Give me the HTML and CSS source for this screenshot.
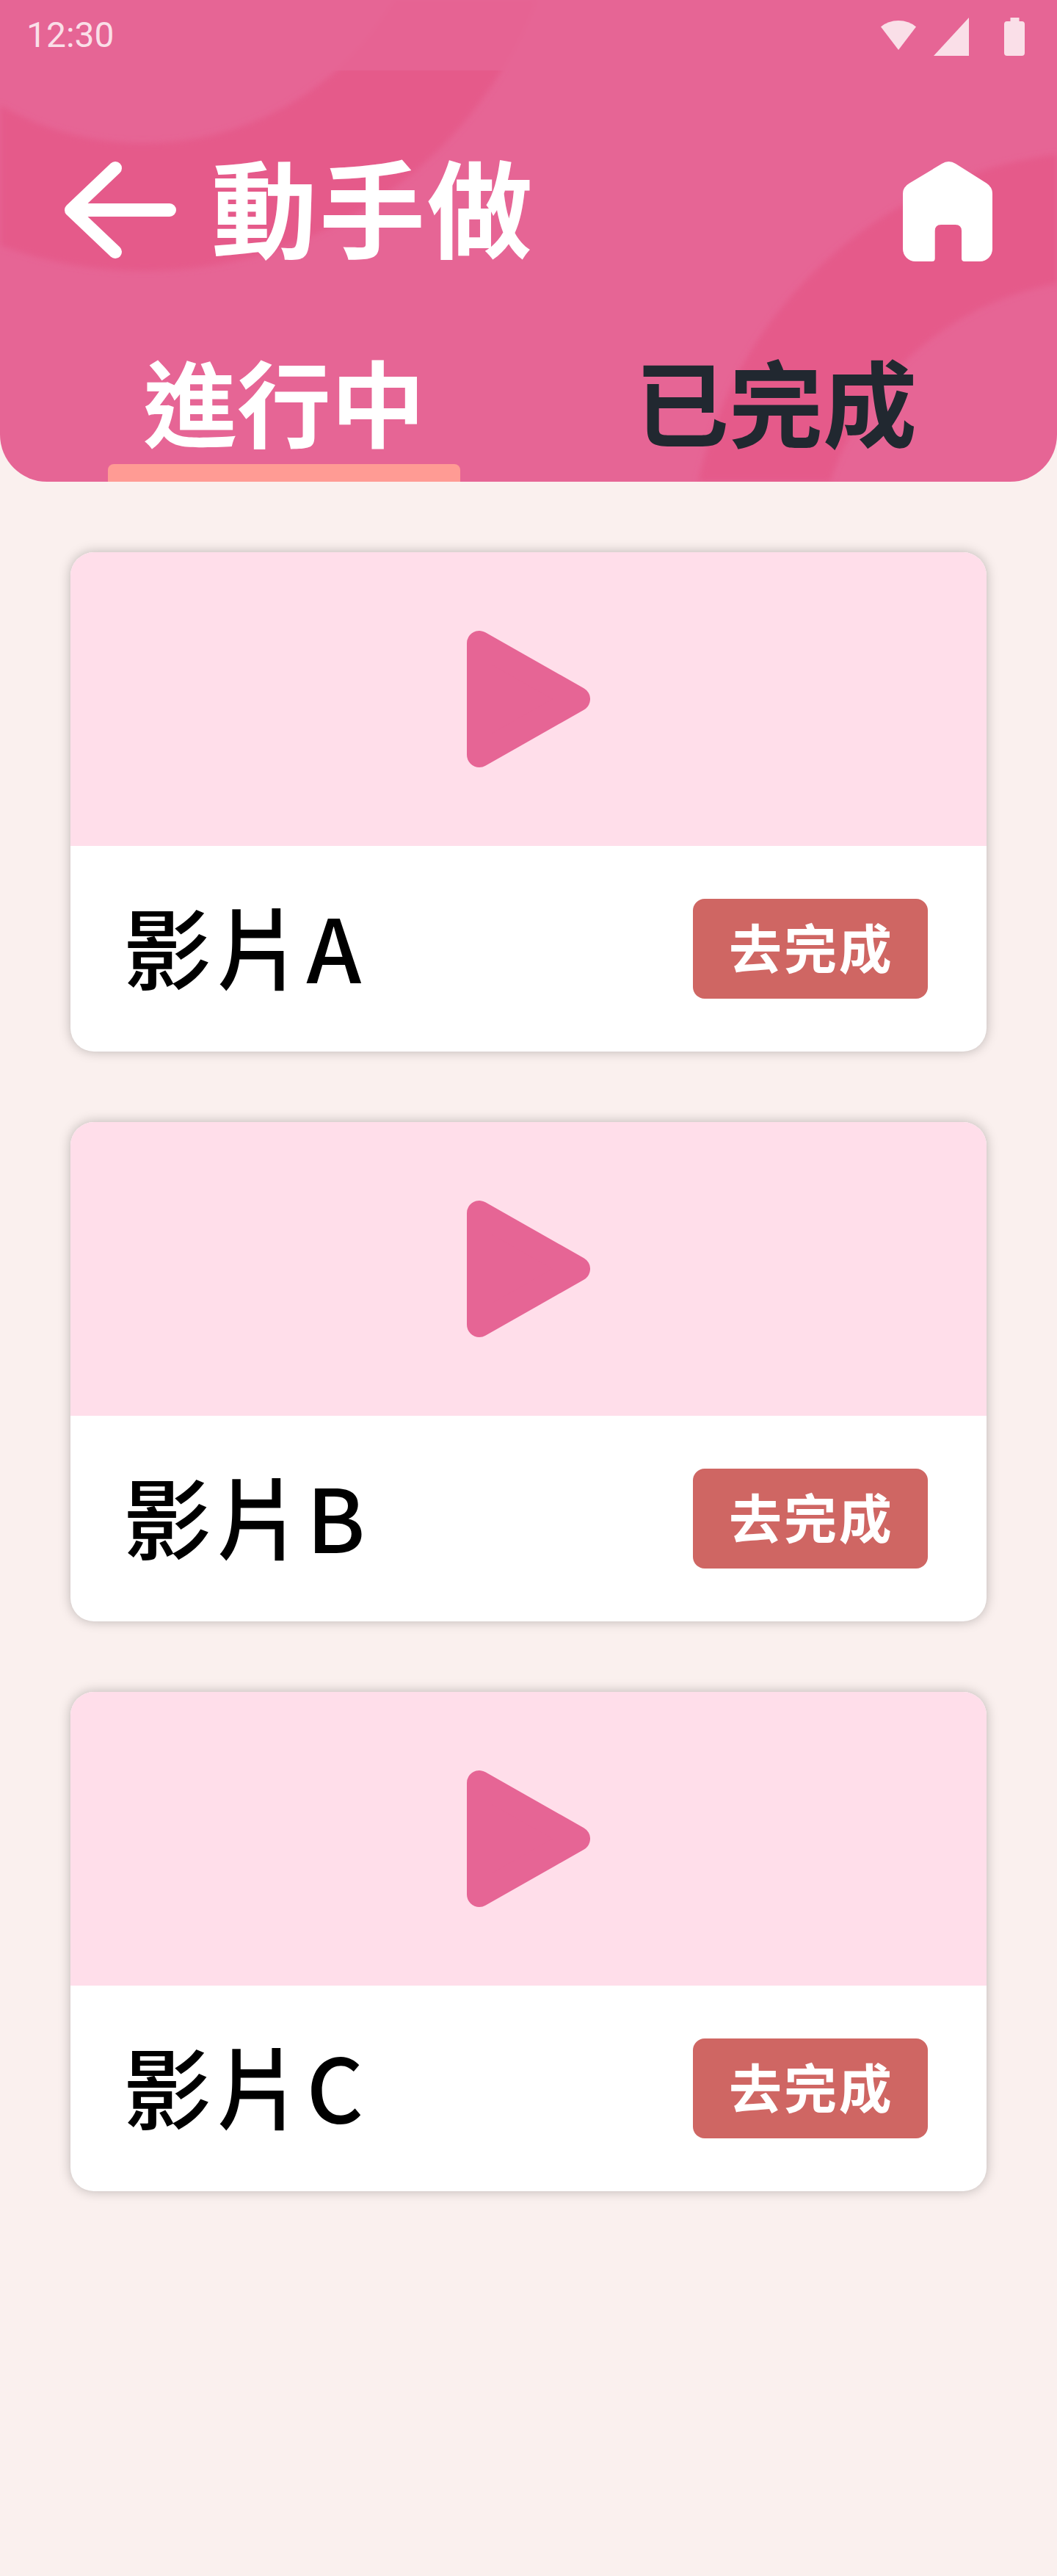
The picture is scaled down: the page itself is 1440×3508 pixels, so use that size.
FILE: index.html
```html
<!DOCTYPE html>
<html lang="zh-Hant">
<head>
<meta charset="utf-8">
<title>動手做</title>
<link rel="stylesheet" href="styles.css">
</head>
<body>
<header class="header">
  <svg class="rings" viewBox="0 0 1440 656" aria-hidden="true">
    <defs>
      <clipPath id="header-area"><rect width="1440" height="656"/></clipPath>
      <filter id="soft" x="-5%" y="-5%" width="110%" height="110%"><feGaussianBlur stdDeviation="4"/></filter>
    </defs>
    <g filter="url(#soft)">
      <g clip-path="url(#header-area)" fill="none" stroke="#e55a8a" stroke-width="174">
        <circle cx="196" cy="-202" r="484"/>
        <circle cx="1510" cy="778" r="485"/>
      </g>
    </g>
  </svg>
  <div class="status">
    <span class="time">12:30</span>
    <svg class="status-icons" viewBox="0 0 196 52" width="196" height="52" aria-hidden="true">
      <path d="M0 12.500Q10 4 24 4T48 12.500L24 44Z"/>
      <path d="M72 52L120 0V52Z"/>
      <path d="M176.500 0H188.500V5H192a4 4 0 0 1 4 4V48a4 4 0 0 1-4 4H172a4 4 0 0 1-4-4V9a4 4 0 0 1 4-4H176.500Z"/>
    </svg>
  </div>
  <div class="bar">
    <svg class="back" viewBox="0 0 152 136" width="152" height="136" aria-hidden="true">
      <path d="M69 9L9 66L69 123M9 66H143" fill="none" stroke="#fff" stroke-width="18" stroke-linecap="round" stroke-linejoin="round"/>
    </svg>
    <h1 class="title">動手做</h1>
    <svg class="home" viewBox="0 0 122 136" width="122" height="136" aria-hidden="true">
      <path d="M53 3Q62.500-3 72 3L114 29.500Q122 34.500 122 44V119A17 17 0 0 1 105 136H84Q80 136 80 132V94.500Q80 86 71.500 86H52Q43.700 86 43.700 94.500V132Q43.700 136 39.700 136H17A17 17 0 0 1 0 119V44Q0 34.500 9 29.500Z" fill="#fff"/>
    </svg>
  </div>
  <nav class="tabs">
    <a class="tab active">進行中</a>
    <a class="tab">已完成</a>
  </nav>
</header>
<main class="list">
  <article class="card">
    <div class="thumb"><svg class="play" viewBox="0 0 168 186" width="168" height="186"><path d="M17 17V169L151 93Z"/></svg></div>
    <div class="info"><h2 class="name">影片A</h2><button class="go">去完成</button></div>
  </article>
  <article class="card">
    <div class="thumb"><svg class="play" viewBox="0 0 168 186" width="168" height="186"><path d="M17 17V169L151 93Z"/></svg></div>
    <div class="info"><h2 class="name">影片B</h2><button class="go">去完成</button></div>
  </article>
  <article class="card">
    <div class="thumb"><svg class="play" viewBox="0 0 168 186" width="168" height="186"><path d="M17 17V169L151 93Z"/></svg></div>
    <div class="info"><h2 class="name">影片C</h2><button class="go">去完成</button></div>
  </article>
</main>
</body>
</html>
```
FILE: styles.css
```css
* { box-sizing: border-box; }

body {
  margin: 0;
  min-height: 3508px;
  background: #faf0ee;
  font-family: "Noto Sans CJK TC", sans-serif;
}

.header {
  position: relative;
  isolation: isolate;
  height: 656px;
  border-radius: 0 0 64px 64px;
  overflow: hidden;
  background: #e66595;
}

/* decorative soft rings behind the header content */
.rings {
  position: absolute;
  inset: 0;
  z-index: -1;
  width: 1440px;
  height: 656px;
}

.status {
  display: flex;
  justify-content: space-between;
  align-items: flex-start;
  height: 96px;
  padding: 24px 44px 0 36px;
  background: rgba(230, 101, 149, 0.8);
}

.time {
  font: 400 48px/48px Roboto, sans-serif;
  color: #fadfe8;
}

.status-icons { fill: #fadfe8; }

.bar {
  display: flex;
  align-items: center;
  height: 384px;
  padding: 0 88px;
}

.title {
  margin: 0;
  padding: 0 0 20px 48px;
  font-size: 144px;
  line-height: 208px;
  font-weight: 700;
  letter-spacing: 2.88px;
  color: #fff;
}

.home { margin-left: auto; }

.tabs {
  display: flex;
  gap: 190px;
  height: 176px;
  padding-left: 147px;
}

.tab {
  display: flex;
  flex-direction: column;
  justify-content: space-between;
  width: 480px;
  text-align: center;
  font-size: 128px;
  line-height: 129px;
  font-weight: 700;
  color: #212830;
}

.active { color: #fff; }

.active::after {
  content: "";
  height: 24px;
  border-radius: 8px 8px 0 0;
  background: #ff9b94;
}

.list {
  display: flex;
  flex-direction: column;
  gap: 96px;
  padding: 96px;
}

.card {
  height: 680px;
  border-radius: 32px;
  overflow: hidden;
  background: #fff;
  box-shadow: 0 0 16px rgba(0, 0, 0, 0.25);
}

.thumb {
  display: flex;
  align-items: center;
  justify-content: center;
  height: 400px;
  background: #ffdeea;
}

.play {
  fill: #e66595;
  stroke: #e66595;
  stroke-width: 34px;
  stroke-linejoin: round;
}

.info {
  display: flex;
  align-items: center;
  justify-content: space-between;
  height: 280px;
  padding: 0 80px 0 72px;
}

.name {
  margin: 0;
  padding-bottom: 10px;
  font-size: 120px;
  line-height: 174px;
  font-weight: 500;
  letter-spacing: 4.8px;
  color: #000;
}

.go {
  width: 320px;
  height: 136px;
  padding: 0 0 8px 2.88px;
  border: 0;
  border-radius: 16px;
  background: #cf6663;
  font: 700 72px/128px "Noto Sans CJK TC", sans-serif;
  letter-spacing: 2.88px;
  color: #fff;
}
```
